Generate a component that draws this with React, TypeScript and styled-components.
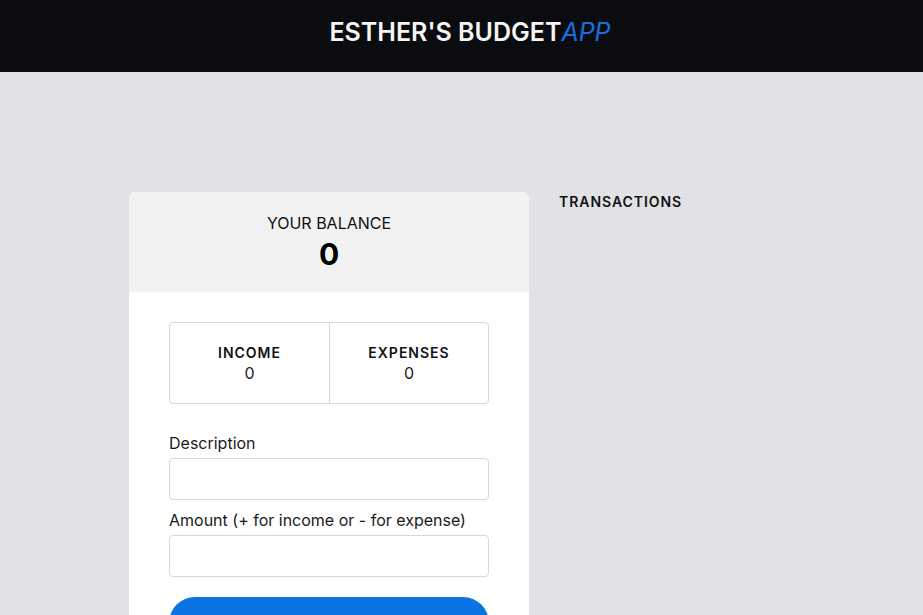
import React from "react";
import styled, { createGlobalStyle } from "styled-components";

const Global = createGlobalStyle`
  html, body { margin: 0; padding: 0; }
  body {
    background: #e1e2e5;
    font-family: Inter, "Noto Sans", sans-serif;
    color: #111;
  }
  * { box-sizing: border-box; }
`;

const TopBar = styled.header`
  height: 72px;
  background: #0b0c10;
  display: flex;
  align-items: center;
  justify-content: center;
  padding: 0 0 9px 17px;
`;

const Title = styled.h1`
  margin: 0;
  font-size: 25px;
  line-height: 30px;
  font-weight: 600;
  color: #f5f5f5;
  letter-spacing: 0;
`;

const TitleAccent = styled.span`
  color: #1a6fe0;
  font-style: italic;
  font-weight: 400;
`;

const Main = styled.main`
  display: flex;
  gap: 30px;
  width: 665px;
  margin: 0 auto;
  padding-top: 120px;
`;

const Card = styled.section`
  width: 400px;
  background: #fff;
  border-radius: 6px;
  overflow: hidden;
`;

const BalanceHead = styled.div`
  background: #f2f2f2;
  padding: 20px 0;
  text-align: center;
`;

const BalanceLabel = styled.div`
  font-size: 16px;
  line-height: 22px;
  color: #111;
`;

const BalanceValue = styled.div`
  font-size: 30px;
  line-height: 36px;
  padding-top: 2px;
  font-weight: 700;
  color: #000;
`;

const Body = styled.div`
  padding: 30px 40px 0;
`;

const Stats = styled.div`
  display: grid;
  grid-template-columns: 1fr 1fr;
  border: 1px solid #d8d8d8;
  border-radius: 4px;
  height: 82px;
`;

const Stat = styled.div<{ $divider?: boolean }>`
  display: flex;
  flex-direction: column;
  align-items: center;
  padding-top: 21px;
  border-left: ${(p) => (p.$divider ? "1px solid #d8d8d8" : "none")};
`;

const StatLabel = styled.div`
  font-size: 14px;
  line-height: 18px;
  font-weight: 600;
  letter-spacing: 1px;
  color: #111;
`;

const StatValue = styled.div`
  font-size: 16px;
  line-height: 22px;
  color: #222;
`;

const Form = styled.form`
  display: flex;
  flex-direction: column;
  padding-top: 28px;
`;

const Label = styled.label<{ $gap?: number }>`
  font-size: 16px;
  line-height: 22px;
  color: #1a1a1a;
  margin-top: ${(p) => p.$gap ?? 0}px;
  margin-bottom: 4px;
`;

const Input = styled.input`
  height: 42px;
  width: 100%;
  border: 1px solid #d8d8d8;
  border-radius: 4px;
  background: #fff;
  font-family: inherit;
  font-size: 16px;
  padding: 0 10px;
`;

const Submit = styled.button`
  margin-top: 20px;
  height: 52px;
  width: 100%;
  border: none;
  border-radius: 26px;
  background: #0b74e5;
  color: #fff;
  font-family: inherit;
  font-size: 16px;
  font-weight: 600;
`;

const Side = styled.aside`
  flex: 1;
`;

const SideHeading = styled.h2`
  margin: 1px 0 0;
  font-size: 14px;
  line-height: 18px;
  font-weight: 600;
  letter-spacing: 0.95px;
  color: #111;
`;

export default function App() {
  return (
    <>
      <Global />
      <TopBar>
        <Title>
          ESTHER'S BUDGET<TitleAccent>APP</TitleAccent>
        </Title>
      </TopBar>
      <Main>
        <Card>
          <BalanceHead>
            <BalanceLabel>YOUR BALANCE</BalanceLabel>
            <BalanceValue>0</BalanceValue>
          </BalanceHead>
          <Body>
            <Stats>
              <Stat>
                <StatLabel>INCOME</StatLabel>
                <StatValue>0</StatValue>
              </Stat>
              <Stat $divider>
                <StatLabel>EXPENSES</StatLabel>
                <StatValue>0</StatValue>
              </Stat>
            </Stats>
            <Form onSubmit={(e) => e.preventDefault()}>
              <Label>Description</Label>
              <Input type="text" />
              <Label $gap={9}>Amount (+ for income or - for expense)</Label>
              <Input type="text" />
              <Submit type="submit">Add transaction</Submit>
            </Form>
          </Body>
        </Card>
        <Side>
          <SideHeading>TRANSACTIONS</SideHeading>
        </Side>
      </Main>
    </>
  );
}
